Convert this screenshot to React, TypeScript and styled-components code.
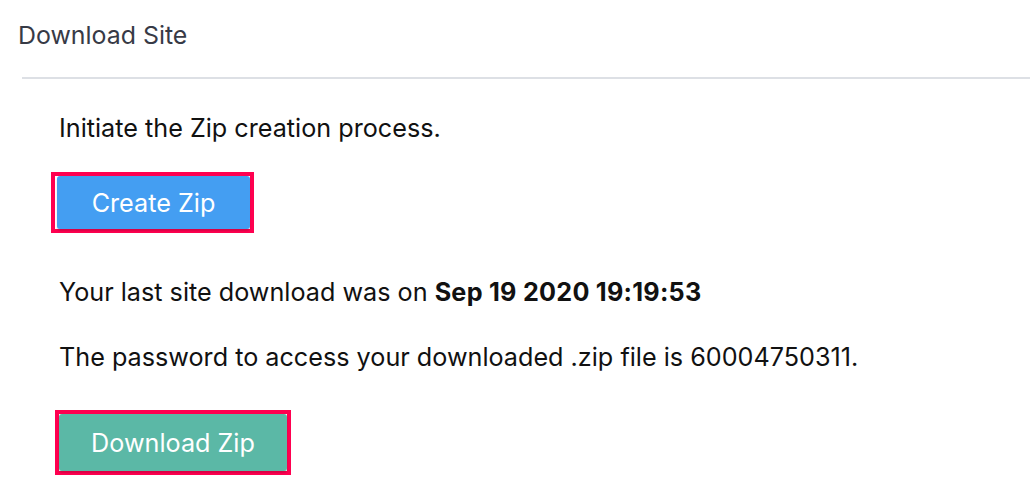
import styled, { createGlobalStyle } from 'styled-components';

const GlobalStyle = createGlobalStyle`
	body {
		margin: 0;
		background: #ffffff;
		font-family: Inter, "Noto Sans", sans-serif;
	}
`;

const Page = styled.div`
	width: 1030px;
	height: 492px;
	overflow: hidden;
`;

const Header = styled.div`
	padding: 20px 0 0 18px;
	height: 77px;
	box-sizing: border-box;
	font-size: 24.9px;
	line-height: 30px;
	color: #373a46;
`;

const Divider = styled.hr`
	margin: 0 0 0 22px;
	border: none;
	border-top: 2px solid #dde0e5;
`;

const Content = styled.div`
	padding: 34px 0 0 59px;
	color: #111111;
	font-size: 25.2px;
`;

const Text = styled.p<{ $top: number }>`
	margin: ${(p) => p.$top}px 0 0;
	line-height: 30px;
`;

const Strong = styled.b`
	font-weight: 700;
	letter-spacing: 0.01em;
`;

const ButtonRow = styled.div<{ $top: number; $shift: number }>`
	margin: ${(p) => p.$top}px 0 0 ${(p) => p.$shift}px;
`;

const Highlight = styled.div<{ $pad: string }>`
	display: inline-flex;
	border: 4px solid #ff0050;
	padding: ${(p) => p.$pad};
`;

const ZipButton = styled.button<{ $color: string; $width: number; $height: number }>`
	display: flex;
	align-items: center;
	justify-content: center;
	width: ${(p) => p.$width}px;
	height: ${(p) => p.$height}px;
	border: none;
	border-radius: 3px;
	background: ${(p) => p.$color};
	color: #ffffff;
	font-family: Inter, "Noto Sans", sans-serif;
	font-size: 25.2px;
	box-shadow: 0 2px 2px rgba(0, 0, 0, 0.15);
	cursor: pointer;
`;

const App = () => {
	return (
		<Page>
			<GlobalStyle />
			<Header>Download Site</Header>
			<Divider />
			<Content>
				<Text $top={0}>Initiate the Zip creation process.</Text>
				<ButtonRow $top={29} $shift={-8}>
					<Highlight $pad="0 0 0 2px">
						<ZipButton $color="#449ef2" $width={193} $height={53}>
							Create Zip
						</ZipButton>
					</Highlight>
				</ButtonRow>
				<Text $top={44}>
					Your last site download was on <Strong>Sep 19 2020 19:19:53</Strong>
				</Text>
				<Text $top={35}>
					The password to access your downloaded .zip file is 60004750311.
				</Text>
				<ButtonRow $top={38} $shift={-4}>
					<Highlight $pad="0">
						<ZipButton $color="#5bb8a6" $width={228} $height={57}>
							Download Zip
						</ZipButton>
					</Highlight>
				</ButtonRow>
			</Content>
		</Page>
	);
};

export default App;
